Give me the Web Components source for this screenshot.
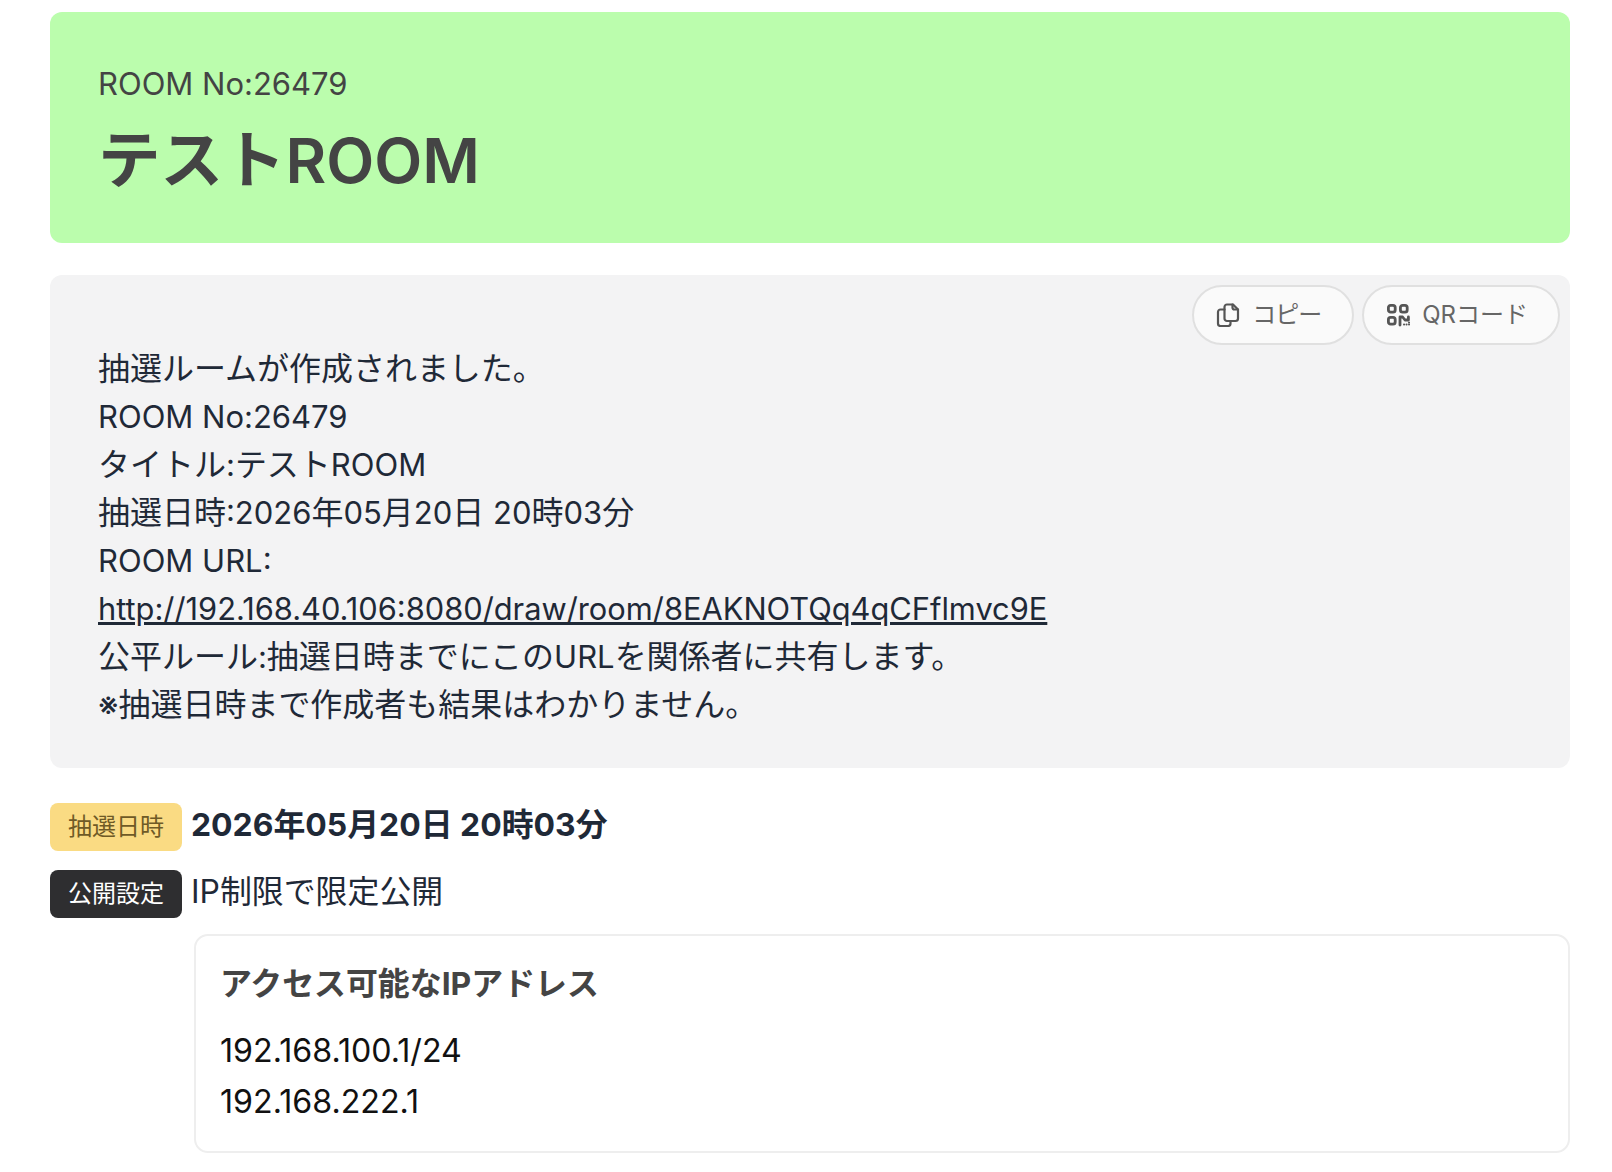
<!DOCTYPE html>
<html lang="ja">
<head>
<meta charset="UTF-8">
<title>テストROOM</title>
<style>
    body {
        margin: 0;
        padding: 12px 42px 20px 50px;
        background: #fff;
        color: #1f2937;
        font-family: Inter, "Noto Sans CJK JP", sans-serif;
    }
</style>
</head>
<body>
<room-header number="26479" name="テストROOM"></room-header>

<message-card>
    <pill-button slot="actions" icon="copy" style="letter-spacing:-1px;padding-right:31px">コピー</pill-button>
    <pill-button slot="actions" icon="qr">QRコード</pill-button>
    <mixed-text>抽選ルームが作成されました。</mixed-text><br>
    <mixed-text>ROOM No:26479</mixed-text><br>
    <mixed-text>タイトル:テストROOM</mixed-text><br>
    <mixed-text>抽選日時:2026年05月20日 20時03分</mixed-text><br>
    <mixed-text>ROOM URL:</mixed-text><br>
    <a href="#" style="color:inherit;font-size:30.8px">http://192.168.40.106:8080/draw/room/8EAKNOTQq4qCFflmvc9E</a><br>
    <mixed-text>公平ルール:抽選日時までにこのURLを関係者に共有します。</mixed-text><br>
    <mixed-text>※抽選日時まで作成者も結果はわかりません。</mixed-text>
</message-card>

<info-row label="抽選日時" kind="date" strong>2026年05月20日 20時03分</info-row>
<info-row label="公開設定" kind="access">IP制限で限定公開</info-row>

<ip-list heading="アクセス可能なIPアドレス">
    <div>192.168.100.1/24</div>
    <div>192.168.222.1</div>
</ip-list>

<script>
    const ICONS = {
        copy: `<path d="M11 1.5h6l5 5v9a2.5 2.5 0 0 1-2.5 2.5H11a2.5 2.5 0 0 1-2.5-2.5V4A2.5 2.5 0 0 1 11 1.5z"/>
               <path d="M16.5 1.5v3a2 2 0 0 0 2 2H22"/>
               <path d="M8.5 6.5h-4A2.5 2.5 0 0 0 2 9v11.5A2.5 2.5 0 0 0 4.5 23H12a2.5 2.5 0 0 0 2.5-2.5V18"/>`,
        qr: `<g stroke-width="2.8">
                <rect x="2.4" y="2.4" width="6.8" height="6.8" rx="2.2"/>
                <rect x="14.4" y="2.4" width="6.8" height="6.8" rx="2.2"/>
                <rect x="2.4" y="14.4" width="6.8" height="6.8" rx="2.2"/>
                <path d="M14 22v-8h2.6l2.4 3h3.4v-3"/>
             </g>
             <path d="M18 21.5h.1M20.5 21.5h.1M23 21.5h.1M23 19.5h.1" stroke-width="2"/>`
    };

    // latin runs stay at the inherited size, kana and kanji run a bit larger
    class MixedText extends HTMLElement {
        constructor() {
            super();
            this.attachShadow({mode: 'open'});
            const runs = this.textContent.split(/([\u3000-\u30ff\u4e00-\u9fff※]+)/);
            this.shadowRoot.innerHTML = `
                <style>
                    :host { display: inline; }
                    .ja { font-size: 1.032em; }
                </style>
                ${runs.map((run, i) => i % 2 ? `<span class="ja">${run}</span>` : run).join('')}
            `;
        }
    }

    class RoomHeader extends HTMLElement {
        constructor() {
            super();
            this.attachShadow({mode: 'open'});
            this.shadowRoot.innerHTML = `
                <style>
                    :host {
                        display: block;
                        background: #bbfdad;
                        border-radius: 12px;
                        padding: 48px 48px 39px;
                        color: #444;
                    }
                    .no { font-size: 31px; line-height: 48px; }
                    h1 { margin: 8px 0 0; font-size: 62.5px; line-height: 88px; font-weight: 600; }
                </style>
                <div class="no">ROOM No:${this.getAttribute('number')}</div>
                <h1>${this.getAttribute('name')}</h1>
            `;
        }
    }

    class PillButton extends HTMLElement {
        constructor() {
            super();
            this.attachShadow({mode: 'open'});
            this.shadowRoot.innerHTML = `
                <style>
                    :host {
                        display: inline-flex;
                        align-items: center;
                        gap: 12px;
                        height: 60px;
                        box-sizing: border-box;
                        padding: 0 30px 0 22px;
                        background: #fafafa;
                        border: 2px solid #e0e0e0;
                        border-radius: 30px;
                        color: #666;
                        font-size: 24px;
                    }
                    svg { flex: none; width: 24px; height: 24px; fill: none; stroke: #555; stroke-width: 2.2; stroke-linecap: round; stroke-linejoin: round; }
                    .label { padding-bottom: 5px; }
                </style>
                <svg viewBox="0 0 24 24">${ICONS[this.getAttribute('icon')]}</svg>
                <span class="label"><slot></slot></span>
            `;
        }
    }

    class MessageCard extends HTMLElement {
        constructor() {
            super();
            this.attachShadow({mode: 'open'});
            this.shadowRoot.innerHTML = `
                <style>
                    :host {
                        display: block;
                        position: relative;
                        margin-top: 32px;
                        padding: 70px 48px 39px;
                        background: #f3f3f4;
                        border-radius: 12px;
                        font-size: 31px;
                        line-height: 48px;
                    }
                    .actions { position: absolute; top: 10px; right: 10px; display: flex; gap: 8px; line-height: normal; }
                </style>
                <div class="actions"><slot name="actions"></slot></div>
                <slot></slot>
            `;
        }
    }

    class InfoRow extends HTMLElement {
        constructor() {
            super();
            this.attachShadow({mode: 'open'});
            const colors = {
                date: 'background:#fadb83;color:#6f5a26',
                access: 'background:#2e2e30;color:#fff'
            };
            this.shadowRoot.innerHTML = `
                <style>
                    :host { display: flex; align-items: flex-start; gap: 9px; margin-top: 19px; }
                    :host(:first-of-type) { margin-top: 35px; }
                    .badge {
                        display: flex;
                        align-items: center;
                        justify-content: center;
                        box-sizing: border-box;
                        width: 132px;
                        height: 48px;
                        padding-bottom: 5px;
                        border-radius: 8px;
                        font-size: 24px;
                    }
                    .value { font-size: 31.9px; line-height: 43px; }
                    :host([strong]) .value { font-weight: 700; }
                </style>
                <span class="badge" style="${colors[this.getAttribute('kind')]}">${this.getAttribute('label')}</span>
                <span class="value"><slot></slot></span>
            `;
        }
    }

    class IpList extends HTMLElement {
        constructor() {
            super();
            this.attachShadow({mode: 'open'});
            this.shadowRoot.innerHTML = `
                <style>
                    :host {
                        display: block;
                        margin: 16px 0 0 144px;
                        padding: 24px;
                        border: 2px solid #eee;
                        border-radius: 14px;
                        color: #111;
                        font-size: 32.2px;
                        line-height: 51px;
                    }
                    h2 { margin: 0 0 17px; font-size: 31.9px; line-height: 48px; font-weight: 700; color: #444; }
                </style>
                <h2>${this.getAttribute('heading')}</h2>
                <slot></slot>
            `;
        }
    }

    customElements.define('mixed-text', MixedText);
    customElements.define('room-header', RoomHeader);
    customElements.define('pill-button', PillButton);
    customElements.define('message-card', MessageCard);
    customElements.define('info-row', InfoRow);
    customElements.define('ip-list', IpList);
</script>
</body>
</html>
